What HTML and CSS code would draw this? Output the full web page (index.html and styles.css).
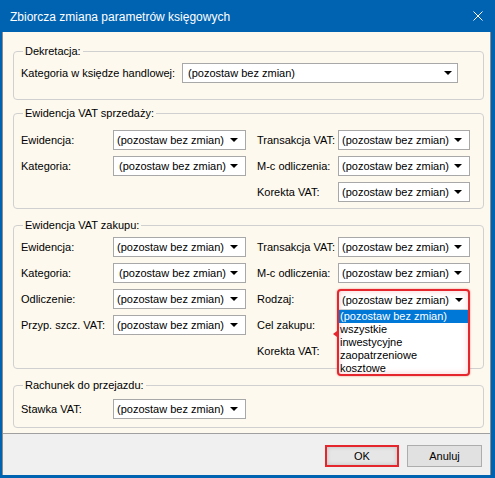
FILE: index.html
```html
<!DOCTYPE html>
<html lang="pl">
<head>
<meta charset="utf-8">
<title>Zbiorcza zmiana parametrów księgowych</title>
<link rel="stylesheet" href="styles.css">
</head>
<body>
<div class="window">
  <div class="titlebar">
    <span class="title">Zbiorcza zmiana parametrów księgowych</span>
    <svg class="close" width="10" height="10" viewBox="0 0 10 10"><path d="M0.5 0.5L9.5 9.5M9.5 0.5L0.5 9.5" stroke="#fff" stroke-width="1"/></svg>
  </div>
  <div class="client">
    <div class="content">
      <fieldset class="group g1">
        <legend>Dekretacja:</legend>
        <div class="row">
          <span class="lbl-wide">Kategoria w księdze handlowej:</span>
          <div class="combo wide"><span>(pozostaw bez zmian)</span><svg width="8" height="4" viewBox="0 0 8 4"><polygon points="0,0 8,0 4,4" fill="#000"/></svg></div>
        </div>
      </fieldset>

      <fieldset class="group g2">
        <legend>Ewidencja VAT sprzedaży:</legend>
        <div class="grid">
          <span class="lbl">Ewidencja:</span>
          <div class="combo"><span>(pozostaw bez zmian)</span><svg width="8" height="4" viewBox="0 0 8 4"><polygon points="0,0 8,0 4,4" fill="#000"/></svg></div>
          <span class="lbl lbl2">Transakcja VAT:</span>
          <div class="combo"><span>(pozostaw bez zmian)</span><svg width="8" height="4" viewBox="0 0 8 4"><polygon points="0,0 8,0 4,4" fill="#000"/></svg></div>

          <span class="lbl">Kategoria:</span>
          <div class="combo shift"><span>(pozostaw bez zmian)</span><svg width="8" height="4" viewBox="0 0 8 4"><polygon points="0,0 8,0 4,4" fill="#000"/></svg></div>
          <span class="lbl lbl2">M-c odliczenia:</span>
          <div class="combo"><span>(pozostaw bez zmian)</span><svg width="8" height="4" viewBox="0 0 8 4"><polygon points="0,0 8,0 4,4" fill="#000"/></svg></div>

          <span></span>
          <span></span>
          <span class="lbl lbl2">Korekta VAT:</span>
          <div class="combo"><span>(pozostaw bez zmian)</span><svg width="8" height="4" viewBox="0 0 8 4"><polygon points="0,0 8,0 4,4" fill="#000"/></svg></div>
        </div>
      </fieldset>

      <fieldset class="group g3">
        <legend>Ewidencja VAT zakupu:</legend>
        <div class="grid">
          <span class="lbl">Ewidencja:</span>
          <div class="combo"><span>(pozostaw bez zmian)</span><svg width="8" height="4" viewBox="0 0 8 4"><polygon points="0,0 8,0 4,4" fill="#000"/></svg></div>
          <span class="lbl lbl2">Transakcja VAT:</span>
          <div class="combo"><span>(pozostaw bez zmian)</span><svg width="8" height="4" viewBox="0 0 8 4"><polygon points="0,0 8,0 4,4" fill="#000"/></svg></div>

          <span class="lbl">Kategoria:</span>
          <div class="combo shift"><span>(pozostaw bez zmian)</span><svg width="8" height="4" viewBox="0 0 8 4"><polygon points="0,0 8,0 4,4" fill="#000"/></svg></div>
          <span class="lbl lbl2">M-c odliczenia:</span>
          <div class="combo"><span>(pozostaw bez zmian)</span><svg width="8" height="4" viewBox="0 0 8 4"><polygon points="0,0 8,0 4,4" fill="#000"/></svg></div>

          <span class="lbl">Odliczenie:</span>
          <div class="combo"><span>(pozostaw bez zmian)</span><svg width="8" height="4" viewBox="0 0 8 4"><polygon points="0,0 8,0 4,4" fill="#000"/></svg></div>
          <span class="lbl lbl2">Rodzaj:</span>
          <div class="dropwrap">
            <div class="callout">
              <div class="cb-head"><span>(pozostaw bez zmian)</span><svg width="8" height="4" viewBox="0 0 8 4"><polygon points="0,0 8,0 4,4" fill="#000"/></svg></div>
              <ul class="list">
                <li class="sel">(pozostaw bez zmian)</li>
                <li>wszystkie</li>
                <li>inwestycyjne</li>
                <li>zaopatrzeniowe</li>
                <li>kosztowe</li>
              </ul>
            </div>
          </div>

          <span class="lbl">Przyp. szcz. VAT:</span>
          <div class="combo"><span>(pozostaw bez zmian)</span><svg width="8" height="4" viewBox="0 0 8 4"><polygon points="0,0 8,0 4,4" fill="#000"/></svg></div>
          <span class="lbl lbl2">Cel zakupu:</span>
          <div class="combo under"></div>

          <span></span>
          <span></span>
          <span class="lbl lbl2">Korekta VAT:</span>
          <div class="combo under"></div>
        </div>
      </fieldset>

      <fieldset class="group g4">
        <legend>Rachunek do przejazdu:</legend>
        <div class="grid">
          <span class="lbl">Stawka VAT:</span>
          <div class="combo"><span>(pozostaw bez zmian)</span><svg width="8" height="4" viewBox="0 0 8 4"><polygon points="0,0 8,0 4,4" fill="#000"/></svg></div>
        </div>
      </fieldset>
    </div>
    <div class="footer">
      <button class="btn ok">OK</button>
      <button class="btn">Anuluj</button>
    </div>
  </div>
</div>
</body>
</html>
```
FILE: styles.css
```css
* { box-sizing: border-box; }
html, body { margin: 0; padding: 0; }
body {
  width: 495px;
  height: 478px;
  overflow: hidden;
  background: #0063b1;
  font-family: "Liberation Sans", Arial, sans-serif;
  font-size: 11px;
  color: #000;
}
.window {
  width: 495px;
  height: 478px;
  display: flex;
  flex-direction: column;
  background: #0063b1;
}
.titlebar {
  height: 32px;
  flex: none;
  display: flex;
  align-items: center;
  justify-content: space-between;
  padding: 1px 12px 0 10px;
  color: #fff;
  font-size: 12px;
}
.title { line-height: 14px; }
.close { display: block; margin-top: -1px; }

.client {
  flex: 1;
  margin: 0 4px 3px 2px;
  border-left: 1px solid #8c8c8c;
  border-right: 1px solid #8c8c8c;
  background: #fdf9ee;
  display: flex;
  flex-direction: column;
}
.content {
  flex: 1;
  padding: 12px 6px 0 10px;
}

.group {
  border: 1px solid #d0d0d0;
  border-radius: 4px;
  margin: 0;
  padding: 0 0 0 7px;
  min-width: 0;
}
.group legend {
  margin-left: 2px;
  padding: 0 2px;
  line-height: 14px;
  font-size: 11px;
}
.g1 { padding-top: 5px; padding-bottom: 16px; }
.g2 { margin-top: 6px; padding-top: 10px; padding-bottom: 6px; }
.g3 { margin-top: 9px; padding-top: 5px; padding-bottom: 7px; }
.g4 { margin-top: 9px; padding-top: 7px; padding-bottom: 8px; }

.row {
  display: flex;
  align-items: center;
  height: 20px;
}
.lbl-wide { width: 161px; white-space: nowrap; }

.grid {
  display: grid;
  grid-template-columns: 92px 133px 92px 132px;
  grid-auto-rows: 20px;
  row-gap: 6px;
  align-items: center;
}
.lbl { white-space: nowrap; }
.lbl2 { padding-left: 11px; }

.combo {
  height: 20px;
  border: 1px solid #a8a8a8;
  background: #fff;
  display: flex;
  align-items: center;
  justify-content: space-between;
  padding: 0 7px 0 3px;
  white-space: nowrap;
}
.combo svg, .cb-head svg { display: block; flex: none; }
.combo.shift { padding-left: 5px; }
.combo.wide { width: 276px; padding: 0 5px 0 5px; }

.dropwrap { position: relative; height: 20px; }
.callout {
  position: absolute;
  top: 0;
  left: -1px;
  width: 133px;
  height: 87px;
  border: 2px solid #e5262c;
  border-radius: 4px;
  background: #fff;
  z-index: 2;
  box-shadow: inset 0 0 6px rgba(229, 38, 44, 0.22), 0 0 2px rgba(229, 38, 44, 0.55);
}
.callout::before {
  content: "";
  position: absolute;
  left: -6px;
  top: 40px;
  border-right: 4px solid #e5262c;
  border-top: 3px solid transparent;
  border-bottom: 3px solid transparent;
}
.cb-head {
  height: 19px;
  display: flex;
  align-items: center;
  justify-content: space-between;
  padding: 0 5px 0 3px;
  white-space: nowrap;
  border-bottom: 1px solid #cfcfcf;
}
.list {
  list-style: none;
  margin: 0;
  padding: 0;
  height: 63px;
  overflow: hidden;
}
.list li {
  height: 13px;
  line-height: 13px;
  padding-left: 1px;
  white-space: nowrap;
}
.list li.sel {
  background: #0078d7;
  color: #fff;
}

.footer {
  flex: none;
  height: 42px;
  border-top: 1px solid #a0a0a0;
  background: #f0f0f0;
  display: flex;
  justify-content: flex-end;
  align-items: flex-start;
  gap: 8px;
  padding: 11px 8px 0 0;
}
.btn {
  width: 75px;
  height: 22px;
  border: 1px solid #adadad;
  background: #e1e1e1;
  font-family: "Liberation Sans", Arial, sans-serif;
  font-size: 11px;
  color: #000;
  padding: 0;
  margin: 0;
}
.btn.ok {
  width: 74px;
  border: 2px solid #e5262c;
  background: #e6e6e6;
  box-shadow: inset 0 0 4px rgba(0, 0, 0, 0.18);
}
```
